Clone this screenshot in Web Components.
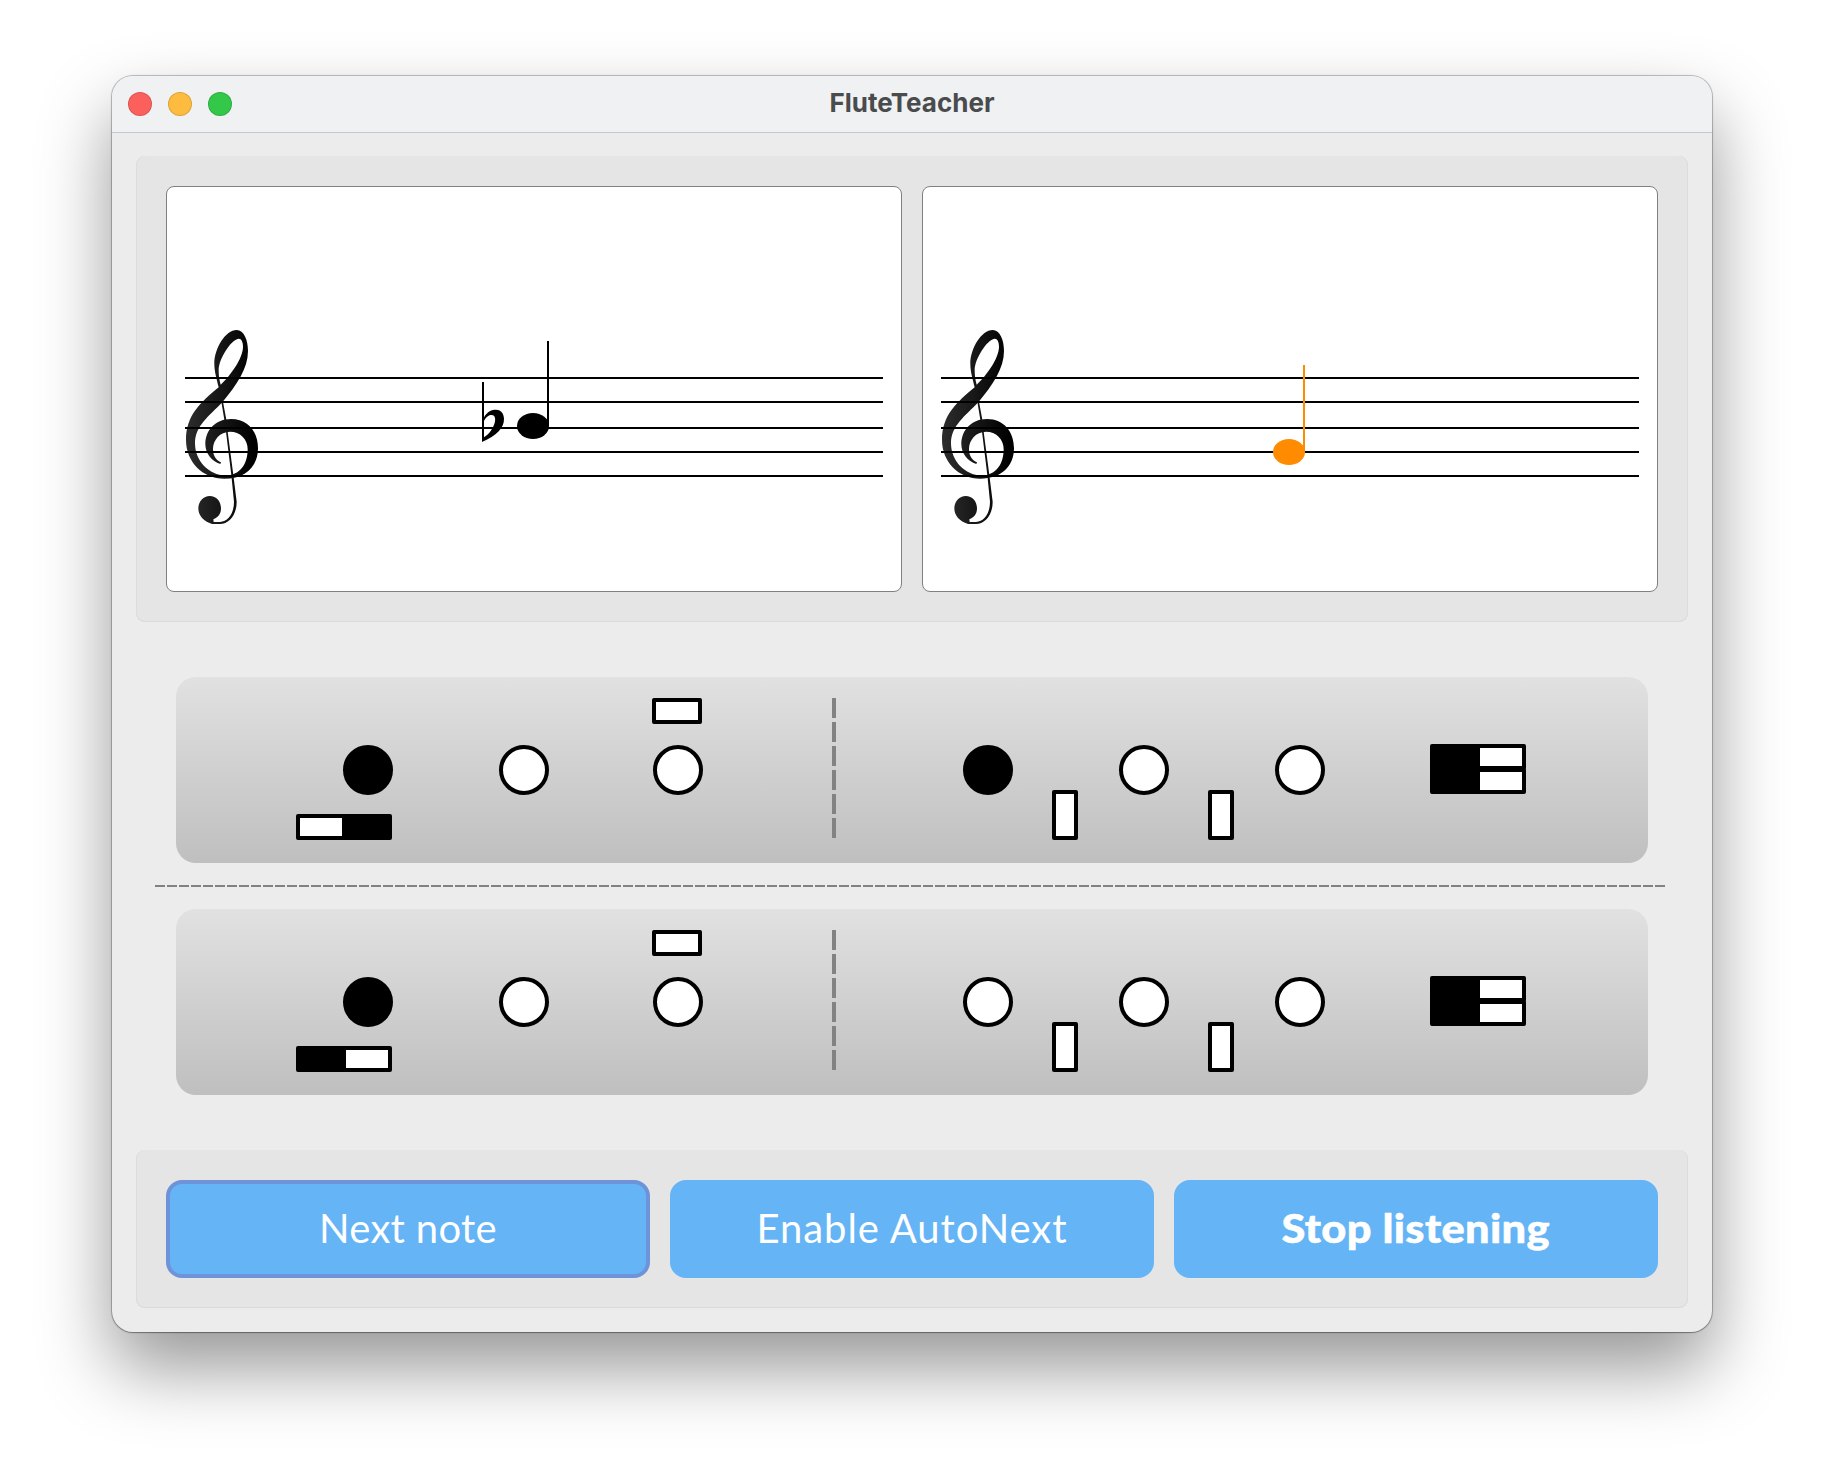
<!DOCTYPE html>
<html lang="en">
<head>
<meta charset="utf-8">
<title>FluteTeacher</title>
<style>
  html, body { margin: 0; background: #fff; }
  body { box-sizing: border-box; width: 1824px; height: 1480px; padding: 76px 112px 0; overflow: hidden; font-family: Inter, "Liberation Sans", sans-serif; }
</style>
</head>
<body>
<mac-window label="FluteTeacher">
  <group-box class="scores">
    <note-staff note="aflat"></note-staff>
    <note-staff note="g"></note-staff>
  </group-box>
  <fingering-chart>
    <flute-keys thumb="right" index></flute-keys>
    <dash-rule></dash-rule>
    <flute-keys thumb="left"></flute-keys>
  </fingering-chart>
  <group-box>
    <push-button focused><span>Next note</span></push-button>
    <push-button wide><span>Enable AutoNext</span></push-button>
    <push-button strong><span>Stop listening</span></push-button>
  </group-box>
</mac-window>

<script>
const attach = (el, html) => { el.attachShadow({ mode: 'open' }).innerHTML = html; };

customElements.define('mac-window', class extends HTMLElement {
  connectedCallback() {
    attach(this, `<style>
      :host { display: flex; flex-direction: column; box-sizing: border-box; width: 1600px; height: 1256px; border-radius: 21px; background: #ececec;
        box-shadow: 0 0 1px 1px rgba(0,0,0,.26), 0 1px 1px rgba(0,0,0,.2), 0 36px 72px rgba(0,0,0,.41); }
      header { display: grid; grid-template-columns: 1fr auto 1fr; align-items: center; box-sizing: border-box; height: 57px; flex: none; padding: 0 16px;
        background: #eff1f3; border-bottom: 1px solid #c6c7c9; border-radius: 21px 21px 0 0; }
      .lights { display: flex; gap: 16px; }
      i { box-sizing: border-box; width: 24px; height: 24px; border-radius: 50%; border: 1px solid rgba(0,0,0,.13); background-clip: border-box; }
      h1 { margin: 0 0 2px; font-size: 26px; line-height: 30px; font-weight: 700; color: #4a4b4c; letter-spacing: 0; }
      main { display: flex; flex-direction: column; flex: 1; padding: 23px 24px 24px; }
    </style>
    <header><div class="lights"><i style="background:#fc605c"></i><i style="background:#fdbc40"></i><i style="background:#34c84a"></i></div><h1></h1><div></div></header>
    <main><slot></slot></main>`);
    this.shadowRoot.querySelector('h1').textContent = this.getAttribute('label');
  }
});

customElements.define('group-box', class extends HTMLElement {
  connectedCallback() {
    attach(this, `<style>
      :host { display: flex; gap: 20px; box-sizing: border-box; height: 158px; padding: 30px; border-radius: 9px; background: #e5e5e5;
        box-shadow: inset 1px 0 #dcdcdc, inset -1px 0 #dcdcdc, inset 0 -1px #dadada; }
      :host(.scores) { height: 466px; }
    </style><slot></slot>`);
  }
});

let staffCount = 0;
customElements.define('note-staff', class extends HTMLElement {
  connectedCallback() {
    const id = 'ink' + (++staffCount);
    const lines = [192, 216, 242, 266, 290].map(y => `<rect x="19" y="${y - 1}" width="698" height="2"/>`).join('');
    const note = this.getAttribute('note') === 'aflat'
      ? `<g transform="translate(294 134) scale(.33333)"><path fill-rule="evenodd" d="M66 186H72V292C82 274 96 269 108 269C125 269 132 283 132 297C132 325 110 346 66 366ZM72 303V352C86 343 98 328 104 309C108 294 104 285 95 285C87 285 78 290 72 303Z"/></g>
         <ellipse cx="367" cy="240" rx="16" ry="13"/><rect x="381" y="155" width="2" height="85"/>`
      : `<g fill="#ff8c00"><ellipse cx="367" cy="266" rx="16" ry="13"/><rect x="381" y="179" width="2" height="87"/></g>`;
    attach(this, `<style>
      :host { display: block; box-sizing: border-box; width: 736px; height: 406px; background: #fff; border: 1px solid #808080; border-radius: 8px; }
      svg { display: block; margin: -1px; }
    </style>
    <svg width="736" height="406" viewBox="0 0 736 406">
      <defs><linearGradient id="${id}" gradientUnits="userSpaceOnUse" x1="48" y1="0" x2="250" y2="0"><stop offset="0" stop-color="#2d2d2d"/><stop offset="1" stop-color="#000"/></linearGradient></defs>
      <g transform="translate(4 129) scale(.33333)" fill="url(#${id})">
        <path fill-rule="evenodd" d="M200 45C222 45 234 75 234 108C234 160 200 210 157 262C118 303 75 332 75 385C75 438 118 481 166 482C212 480 233 446 233 402C233 372 210 350 180 350C150 350 129 375 129 402C129 424 140 437 153 442L151 447C125 440 106 415 106 388C106 345 137 312 183 312C234 312 264 350 264 400C264 454 226 491 163 491C97 491 48 440 48 375C48 301 92 262 146 217C140 190 133 170 133 146C133 100 167 45 200 45ZM205 71C184 74 146 130 146 166C146 182 148 196 152 209C181 182 219 130 219 95C219 80 214 70 205 71Z"/>
        <path d="M154 260L159 260L169 314L173 350L190 480L200 560C200 602 176 627 150 627H126C101 619 85 603 85 580C85 559 101 543 119 543C139 543 153 559 153 580C153 598 144 607 130 613L131 621H150C176 619 192 594 192 560L184 480L168 350L163 314Z"/>
      </g>
      ${lines}${note}
    </svg>`);
  }
});

customElements.define('fingering-chart', class extends HTMLElement {
  connectedCallback() {
    attach(this, `<style>
      :host { display: flex; flex-direction: column; align-items: center; gap: 22px; flex: 1; padding-top: 55px; }
    </style><slot></slot>`);
  }
});

customElements.define('dash-rule', class extends HTMLElement {
  connectedCallback() {
    attach(this, `<style>
      :host { display: block; width: 1510px; height: 2px; margin-right: 4px; background: repeating-linear-gradient(90deg, #828282 0 10px, transparent 10px 12px); }
    </style>`);
  }
});

customElements.define('flute-keys', class extends HTMLElement {
  connectedCallback() {
    const hole = (x, down) => `<circle cx="${x + 25}" cy="93" r="23" fill="${down ? '#000' : '#fff'}"/>`;
    const key = (x, y, w, h, down) => `<rect x="${x + 2}" y="${y + 2}" width="${w - 4}" height="${h - 4}" fill="${down ? '#000' : '#fff'}"/>`;
    const right = this.getAttribute('thumb') === 'right';
    attach(this, `<style>
      :host { display: block; width: 1472px; height: 186px; border-radius: 20px; background: linear-gradient(#e1e1e1, #bfbfbf); }
      svg { display: block; }
    </style>
    <svg width="1472" height="186" viewBox="0 0 1472 186">
      <path d="M658 21V161" stroke="#828282" stroke-width="4" stroke-dasharray="20 4"/>
      <g stroke="#000" stroke-width="4" stroke-linejoin="round">
        ${hole(167, true)}${hole(323)}${hole(477)}
        ${key(476, 21, 50, 26)}
        ${key(120, 137, 50, 26, !right)}${key(166, 137, 50, 26, right)}
        ${hole(787, this.hasAttribute('index'))}${hole(943)}${hole(1099)}
        ${key(876, 113, 26, 50)}${key(1032, 113, 26, 50)}
        ${key(1254, 67, 50, 50, true)}${key(1300, 67, 50, 26)}${key(1300, 91, 50, 26)}
      </g>
    </svg>`);
  }
});

customElements.define('push-button', class extends HTMLElement {
  connectedCallback() {
    attach(this, `<style>
      :host { display: flex; align-items: center; justify-content: center; box-sizing: border-box; width: 484px; height: 98px; padding-bottom: 2px; border-radius: 16px;
        border: 4px solid #64b4f6; background: #64b4f6; color: #fff; font: 400 40px/48px Lato, "Open Sans", sans-serif; white-space: nowrap; letter-spacing: .3px; }
      :host([wide]) { letter-spacing: .95px; }
      :host([focused]) { border-color: #6f93d9; }
      :host([strong]) { font-weight: 900; letter-spacing: .3px; -webkit-text-stroke: .5px #fff; }
      :host([strong]) ::slotted(span) { transform: scaleX(1.085); }
    </style><slot></slot>`);
  }
});
</script>
</body>
</html>
